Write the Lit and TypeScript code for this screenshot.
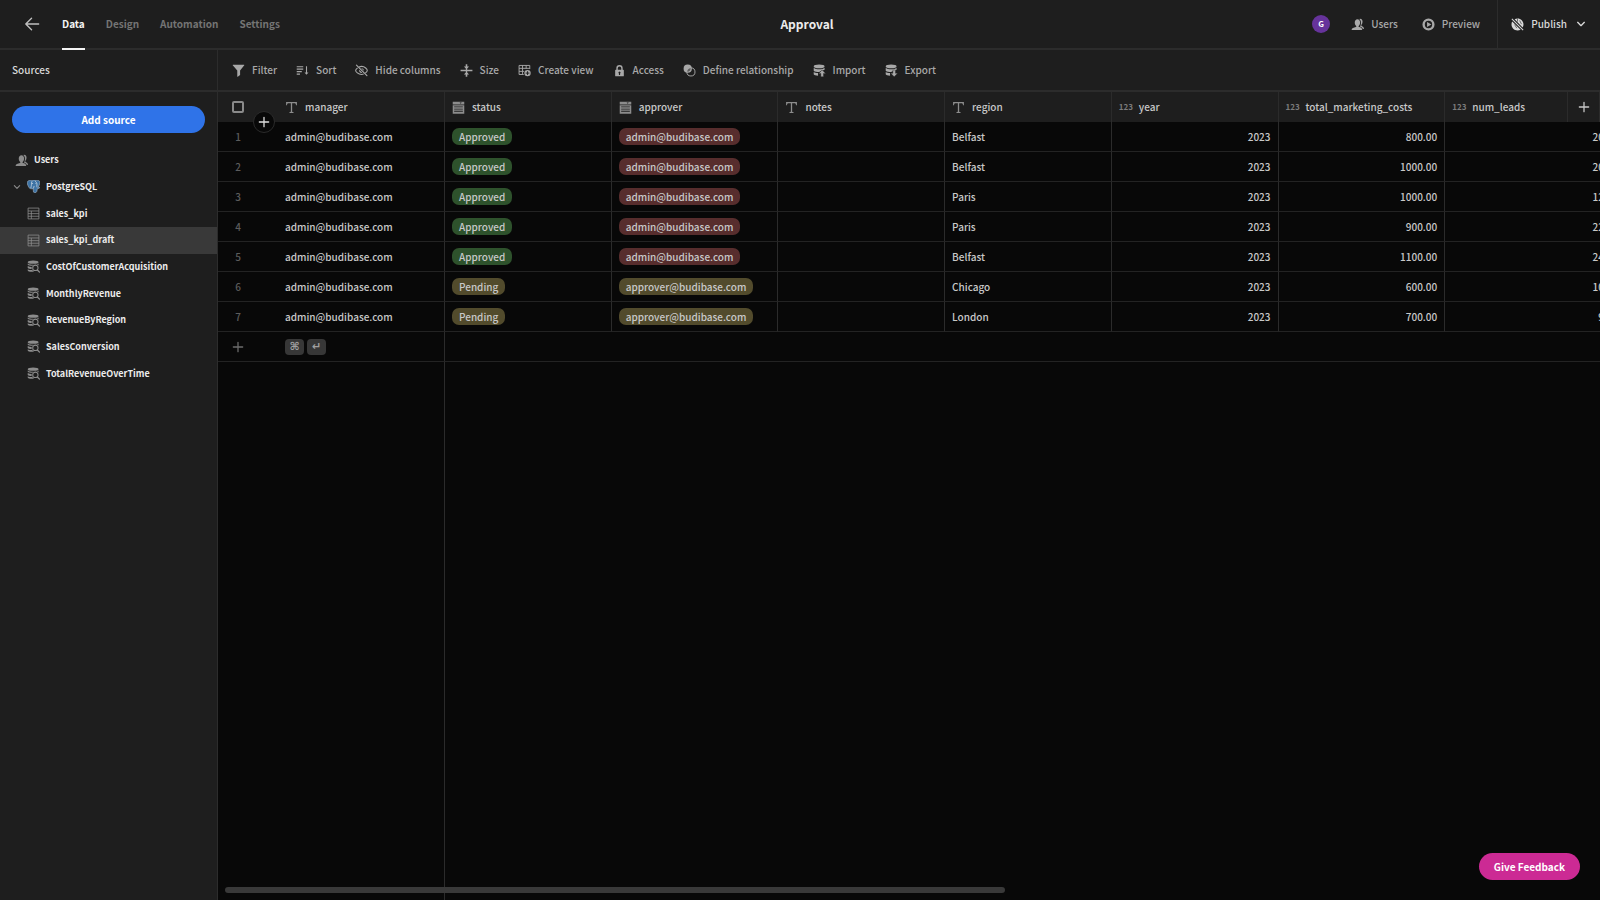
import { LitElement, html, css, svg, nothing } from "lit";
import { customElement, property, state } from "lit/decorators.js";
import { classMap } from "lit/directives/class-map.js";

const ICONS: Record<string, unknown> = {
  back: svg`<path d="M16.500 9H2M8.500 2.500 2 9l6.500 6.500" fill="none" stroke="currentColor" stroke-width="1.500" stroke-linecap="round" stroke-linejoin="round"/>`,
  users: svg`<path d="M11 12.6c-.6-.4-.7-1-.4-1.6 1.3-1.2 2-3 2-4.900 0-2.600-1.500-4.400-3.700-4.400S5.200 3.500 5.200 6.100c0 1.900.7 3.700 2 4.900.4.6.2 1.200-.4 1.600C3.800 13.300.8 14 .8 16.500h14.700c0-2.500-1.700-3.300-4.500-3.900z"/><path d="M12.500 1.200c2.200 0 3.500 1.500 3.500 4 0 1.800-.6 3.300-1.700 4.500-.3.6 0 1.100.5 1.400 1.700.6 3.100 1.500 3.100 4h-1.500c-.5-1.700-2-2.500-3.900-3.100.9-1.400 1.300-3.600 1.300-5.600 0-2.100-.9-3.800-2.300-4.900z"/>`,
  play: svg`<path fill-rule="evenodd" d="M9 .6a8.400 8.400 0 1 0 0 16.800A8.400 8.400 0 0 0 9 .6zm0 3.300a5.100 5.100 0 1 1 0 10.200A5.100 5.100 0 0 1 9 3.900z"/><path d="M7 5.400 13 9l-6 3.600z"/>`,
  publish: svg`<path d="M5 1.700C6.200 1 7.600.7 9 .7c4.600 0 8.300 3.700 8.300 8.300 0 1.600-.4 3-1.200 4.200zM1.700 5 13.300 16.200C12 17 10.600 17.300 9 17.300 4.400 17.300.7 13.600.7 9c0-1.500.3-2.800 1-4z"/><path d="M1.200 1.200 16.800 16.800" stroke="currentColor" stroke-width="1.400"/><path d="M9 1v4M5 9l3 5M12 3.500l2.500 5" stroke="#1e1e1e" stroke-width=".8"/>`,
  chevron: svg`<path d="M3 6 9 12 15 6" fill="none" stroke="currentColor" stroke-width="2.400" stroke-linecap="round" stroke-linejoin="round"/>`,
  filter: svg`<path d="M1.400 1h15.200c.5 0 .7.500.4.900L11.200 9v6.200l-3.200 2.500c-.3.200-.7 0-.7-.4V9L1 1.900C.700 1.500 1 1 1.400 1z"/>`,
  sort: svg`<path d="M1 3h9v1.600H1zM1 6.400h9V8H1zM1 9.800h7v1.600H1zM1 13.200h4.500v1.600H1zM13.800 3h1.500v8.800h2L14.500 15l-2.700-3.200h2z"/>`,
  hide: svg`<path d="M2 1.500 16.500 16" stroke="currentColor" stroke-width="1.600" stroke-linecap="round"/><path d="M5.500 4.200C7 3.500 8 3.300 9.200 3.300c4.500 0 7.800 4 7.800 5.600 0 .9-1 2.400-2.800 3.700M3.600 5.400C1.800 6.700.9 8.100.9 8.900c0 1.500 3.500 5.600 8.200 5.600 1 0 2-.2 2.900-.5" fill="none" stroke="currentColor" stroke-width="1.500"/><path d="M8.500 5.800a3.300 3.300 0 0 1 3.700 3.700zM5.800 8a3.300 3.300 0 0 0 4.300 4.100z"/>`,
  size: svg`<path d="M.8 8.100h16.400V10H.8zM8.100 3h1.800v12H8.100z"/><path d="M9 7.400 5.400 3.600h2.500V.2h2.200v3.400h2.500zM9 10.600l3.600 3.800h-2.500v3.400H7.900v-3.400H5.400z"/>`,
  view: svg`<path d="M1.500 2h14.800v5M1.500 2v12.500H8M1.500 6h14.800M1.500 10.200h7M6.300 2v12.500M11.300 2v4.500" fill="none" stroke="currentColor" stroke-width="1.300"/><circle cx="13.200" cy="12.600" r="4.400"/><path d="M13.200 10v5.200M10.600 12.600h5.200" stroke="#1e1e1e" stroke-width="1.300"/>`,
  lock: svg`<path fill-rule="evenodd" d="M14.200 8h-.8V5.800a4.400 4.400 0 0 0-8.800 0V8h-.8c-.5 0-.8.300-.8.800v7.400c0 .5.300.8.800.8h10.400c.5 0 .8-.3.800-.8V8.800c0-.5-.3-.8-.8-.8zM6.600 5.800a2.400 2.400 0 0 1 4.800 0V8H6.600zm3.200 7.400v2H8.200v-2a1.400 1.400 0 1 1 1.600 0z"/>`,
  relation: svg`<circle cx="6.500" cy="6.500" r="5.700"/><circle cx="11" cy="11" r="5.600" fill="none" stroke="currentColor" stroke-width="1.300"/><path d="M5.800 10.600a5.300 5.300 0 0 1 5-4.800 5.300 5.300 0 0 1-5 4.800z" fill="#1e1e1e" opacity=".55"/>`,
  importdb: svg`<ellipse cx="8.500" cy="3.300" rx="7.500" ry="2.500"/><path d="M1 5.200c1.600 1.600 4.500 2 7.500 2s5.900-.4 7.500-2v2.600c-1 .6-2 .8-3 .9L8.500 11C5.500 11 2.400 10.600 1 9.200zM1 11c1.300 1.200 3.600 1.500 6 1.500v3.800C4 16.200 1 15.500 1 14.300z"/><path d="m12.700 8.200 4.800 4.800h-3v4.500h-3.600V13h-3z" stroke="#1e1e1e" stroke-width=".5"/>`,
  exportdb: svg`<ellipse cx="8.500" cy="3.300" rx="7.500" ry="2.500"/><path d="M1 5.200c1.600 1.600 4.500 2 7.500 2s5.900-.4 7.500-2v2.600c-1 .6-2 .8-3 .9L8.500 11C5.500 11 2.400 10.600 1 9.200zM1 11c1.300 1.200 3.600 1.500 6 1.500v3.800C4 16.200 1 15.500 1 14.300z"/><path d="m12.700 17.600 4.800-4.800h-3V8.300h-3.600v4.500h-3z" stroke="#1e1e1e" stroke-width=".5"/>`,
  text: svg`<path d="M1.500 1.500h15v4.300h-1.300c-.1-1.800-.6-2.700-2.300-2.700H9.900v11.200c0 .9.500 1.200 2 1.200v1.200H6.100v-1.200c1.500 0 2-.3 2-1.200V3.100h-3c-1.700 0-2.200.9-2.300 2.700H1.500z"/>`,
  options: svg`<path fill-rule="evenodd" d="M1 1h16v4H1zm9.500 1.200L12 3.900l1.500-1.700z"/><path fill-rule="evenodd" d="M1 6h16v11.500H1zm2 1.600v1.200h12V7.600zm0 3v1.200h12v-1.200zm0 3v1.200h12v-1.200z"/>`,
  plus: svg`<path d="M9 2v14M2 9h14" stroke="currentColor" stroke-width="1.900" stroke-linecap="round"/>`,
  table: svg`<path d="M1.500 1.500h15v15h-15zM1.500 5.500h15M1.500 9.200h15M1.500 12.800h15M6 5.500v11" fill="none" stroke="currentColor" stroke-width="1.100"/>`,
  query: svg`<ellipse cx="8.500" cy="3" rx="7.500" ry="2.300"/><path d="M1 4.800c2 1.400 4.800 1.800 7.500 1.800S14 6.200 16 4.800v2.700a5.500 5.500 0 0 0-8.500.6C4.500 8 2 7.500 1 6.500zM1 8.300c1.500.8 3.500 1.200 5.600 1.300-.3 1-.3 2 0 2.900-2.400 0-4.500-.4-5.600-1.300zM1 12.800c1.500.8 4 1.200 6.300 1.200.6 1 1.500 1.700 2.600 2.100C5.500 16.800 1 16 1 14.500z"/><circle cx="11.600" cy="11" r="3.700" fill="none" stroke="currentColor" stroke-width="1.400"/><path d="m14.300 13.800 3 3" stroke="currentColor" stroke-width="1.900" stroke-linecap="round"/>`,
  postgres: svg`<path d="M2.600.8C4.500-.2 6.200.3 7.400.6c1.200-.6 2.800-.6 4.100-.1 2.500-.7 4.800-.2 6 1.200.9 1.600-.4 5.900-2 8.400 1.100.2 1.900-.1 2.300.2-.3 1.200-2.100 1.900-3.700 1.800-.1 2.200-.2 4.100-1.600 5.200-1.200.8-2.900.6-3.500-.6-.5-1.400-.2-3.200-.4-4.900-1.100.7-2.600.6-3.400.1-.7.500-1.400 0-2-1C1.700 9.200.4 5.700.4 3.800.4 2.500 1.400 1.300 2.600.8z" fill="#3d73a5" stroke="#aebccb" stroke-width=".8"/><path d="M7.200 1.600C5.900 3 6.300 5.200 6.100 7.400c.1 1.400-.8 2.200-.8 3.800M11.200 1.400c1.900 1.400 2.800 3.200 2.600 5.400-.2 1.300-.4 2.200.2 3.500M8.900 11.600c-.1-1.600 1.100-1.900 1-3.400M6.900 4.900h1.500M11.700 4.700h1.200" fill="none" stroke="#d4dee8" stroke-width="1"/>`,
};

@customElement("ui-icon")
class UiIcon extends LitElement {
  @property() name = "";
  static styles = css`
    :host { display: inline-flex; flex: none; width: 13px; height: 13px; }
    svg { width: 100%; height: 100%; fill: currentColor; display: block; }
  `;
  render() {
    return html`<svg viewBox="0 0 18 18" aria-hidden="true">${ICONS[this.name] ?? nothing}</svg>`;
  }
}

interface Row {
  status: "Approved" | "Pending";
  approver: string;
  region: string;
  costs: string;
  leads: number;
}

const ADMIN = "admin@budibase.com";
const APPROVER = "approver@budibase.com";

@customElement("app-root")
class AppRoot extends LitElement {
  @state() private selected = "sales_kpi_draft";

  private tabs = ["Data", "Design", "Automation", "Settings"];

  private sources = [
    { name: "Users", icon: "users", level: 0 },
    { name: "PostgreSQL", icon: "postgres", level: 1 },
    { name: "sales_kpi", icon: "table", level: 2 },
    { name: "sales_kpi_draft", icon: "table", level: 2 },
    { name: "CostOfCustomerAcquisition", icon: "query", level: 2 },
    { name: "MonthlyRevenue", icon: "query", level: 2 },
    { name: "RevenueByRegion", icon: "query", level: 2 },
    { name: "SalesConversion", icon: "query", level: 2 },
    { name: "TotalRevenueOverTime", icon: "query", level: 2 },
  ];

  private tools = [
    ["filter", "Filter"],
    ["sort", "Sort"],
    ["hide", "Hide columns"],
    ["size", "Size"],
    ["view", "Create view"],
    ["lock", "Access"],
    ["relation", "Define relationship"],
    ["importdb", "Import"],
    ["exportdb", "Export"],
  ];

  private columns = [
    ["options", "status"],
    ["options", "approver"],
    ["text", "notes"],
    ["text", "region"],
    ["number", "year"],
    ["number", "total_marketing_costs"],
    ["number", "num_leads"],
  ];

  private rows: Row[] = [
    { status: "Approved", approver: ADMIN, region: "Belfast", costs: "800.00", leads: 20 },
    { status: "Approved", approver: ADMIN, region: "Belfast", costs: "1000.00", leads: 20 },
    { status: "Approved", approver: ADMIN, region: "Paris", costs: "1000.00", leads: 12 },
    { status: "Approved", approver: ADMIN, region: "Paris", costs: "900.00", leads: 22 },
    { status: "Approved", approver: ADMIN, region: "Belfast", costs: "1100.00", leads: 24 },
    { status: "Pending", approver: APPROVER, region: "Chicago", costs: "600.00", leads: 10 },
    { status: "Pending", approver: APPROVER, region: "London", costs: "700.00", leads: 9 },
  ];

  static styles = css`
    :host {
      display: flex;
      flex-direction: column;
      height: 100vh;
      overflow: hidden;
      background: #080808;
      color: #c8c8c8;
      font: 500 10px/16px "Noto Sans CJK SC", "Noto Sans", sans-serif;
    }
    * { box-sizing: border-box; }
    button { font: inherit; color: inherit; background: none; border: 0; padding: 0; margin: 0; cursor: pointer; }
    a { color: inherit; text-decoration: none; }

    .top {
      display: grid;
      grid-template-columns: 1fr auto 1fr;
      height: 50px;
      flex: none;
      background: #1e1e1e;
      border-bottom: 2px solid #2c2c2c;
    }
    .top-left { display: flex; align-items: stretch; padding-left: 24px; }
    .back { display: flex; align-items: center; color: #c0c0c0; margin-right: 22px; }
    .back ui-icon { width: 16px; height: 16px; }
    .tabs { display: flex; gap: 21px; margin-bottom: -2px; }
    .tab { display: flex; align-items: center; font-weight: 700; color: #747474; border-bottom: 2px solid transparent; }
    .tab.on { color: #f4f4f4; border-color: #f4f4f4; }
    .title { margin: 0; align-self: center; padding-left: 14px; font-size: 12px; line-height: 20px; font-weight: 700; color: #ececec; }
    .top-right { display: flex; align-items: stretch; justify-content: flex-end; }
    .avatar {
      align-self: center;
      width: 18px;
      height: 18px;
      border-radius: 50%;
      background: #66339b;
      color: #fff;
      font-size: 8px;
      line-height: 18px;
      font-weight: 700;
      text-align: center;
      margin-right: 21px;
    }
    .action { display: flex; align-items: center; gap: 7px; color: #a8a8a8; margin-right: 24px; }
    .action:nth-of-type(2) { margin-right: 17px; }
    .publish {
      display: flex;
      align-items: center;
      gap: 7px;
      padding: 0 14px 0 13px;
      border-left: 1px solid #2c2c2c;
      color: #d8d8d8;
    }
    .caret { width: 10px; height: 10px; margin-left: 2px; }

    .body { flex: 1; min-height: 0; display: flex; }
    .side { width: 218px; flex: none; background: #1e1e1e; border-right: 1px solid #2c2c2c; }
    .side-head {
      margin: 0;
      height: 42px;
      display: flex;
      align-items: center;
      padding: 0 12px;
      border-bottom: 2px solid #2c2c2c;
      font-size: 10px;
      font-weight: 500;
      color: #d8d8d8;
    }
    .add-source {
      display: block;
      width: calc(100% - 24px);
      height: 27px;
      margin: 14px 12px;
      border-radius: 14px;
      background: #2f73e8;
      color: #fff;
      font-weight: 700;
    }
    .tree { display: grid; grid-auto-rows: 1fr; height: 240px; margin: 0; padding: 0; list-style: none; }
    .node {
      display: flex;
      align-items: center;
      gap: 6px;
      width: 100%;
      height: 100%;
      padding-left: 15px;
      font-size: 9px;
      font-weight: 700;
      color: #ececec;
    }
    .node .glyph { color: #8c8c8c; }
    .node.sub { padding-left: 27px; }
    .node.root { padding-left: 13px; }
    .node.on { background: #393939; }
    .node .twist { width: 8px; height: 8px; color: #8c8c8c; }

    .main { flex: 1; min-width: 0; display: flex; flex-direction: column; position: relative; }
    .tools {
      display: flex;
      align-items: center;
      gap: 19px;
      height: 42px;
      flex: none;
      padding: 0 14px;
      background: #1e1e1e;
      border-bottom: 2px solid #2c2c2c;
    }
    .tool { display: flex; align-items: center; gap: 7px; color: #a8a8a8; white-space: nowrap; }

    .grid { flex: 1; min-height: 0; display: flex; flex-direction: column; overflow: hidden; position: relative; }
    table { border-collapse: separate; border-spacing: 0; table-layout: fixed; width: 1394px; flex: none; }
    .c-index { width: 60px; }
    .c-main { width: 167px; }
    th, td { height: 30px; padding: 0 7px; border-right: 1px solid #2b2b2b; text-align: left; font-weight: 500; white-space: nowrap; overflow: hidden; }
    th { background: #1e1e1e; }
    td { border-bottom: 1px solid #232323; background: #080808; line-height: 16px; }
    .th { display: flex; align-items: center; gap: 7px; line-height: 16px; }
    .th ui-icon { color: #8c8c8c; }
    .digits { width: 13px; flex: none; font-size: 8px; line-height: 12px; font-weight: 700; color: #7c7c7c; }
    .index { border-right: 0; padding: 0; color: #5c5c5c; }
    .index-in { display: flex; justify-content: center; width: 40px; }
    .num { text-align: right; }
    .tick { appearance: none; display: block; width: 12px; height: 12px; margin: 0; border: 2px solid #8a8a8a; border-radius: 2px; }
    .pill { display: block; width: fit-content; height: 17px; line-height: 17px; padding: 0 7px; border-radius: 7px; }
    .green { background: #2e522c; }
    .red { background: #572d2d; }
    .olive { background: #524b2c; }
    .add-row { display: inline-flex; color: #6c6c6c; }
    .add-row ui-icon, .add-col ui-icon { width: 12px; height: 12px; }
    .keys { display: flex; gap: 3px; }
    kbd {
      height: 16px;
      min-width: 19px;
      padding: 0 4px;
      border-radius: 4px;
      background: #373737;
      color: #a0a0a0;
      font: 700 11px/16px "DejaVu Sans", sans-serif;
      text-align: center;
    }
    .rest { flex: 1; width: 227px; border-right: 1px solid #2b2b2b; }
    .add-col {
      position: absolute;
      top: 0;
      right: 0;
      width: 33px;
      height: 30px;
      display: flex;
      align-items: center;
      justify-content: center;
      background: #1e1e1e;
      border-left: 1px solid #2b2b2b;
      border-right: 1px solid #2b2b2b;
      color: #c8c8c8;
    }
    .insert {
      position: absolute;
      top: 19px;
      left: 35px;
      width: 22px;
      height: 22px;
      display: flex;
      align-items: center;
      justify-content: center;
      border: 1px solid #2b2b2b;
      border-radius: 50%;
      background: #080808;
      color: #e0e0e0;
    }
    .insert ui-icon { width: 12px; height: 12px; }
    .scroll { position: absolute; left: 7px; right: 7px; bottom: 7px; height: 6px; }
    .thumb { width: 57%; height: 6px; border-radius: 3px; background: #393939; }
    .feedback {
      position: absolute;
      right: 20px;
      bottom: 20px;
      height: 27px;
      padding: 0 15px;
      border-radius: 14px;
      background: #cc2a94;
      color: #fff;
      font-weight: 700;
    }
  `;

  private renderNode(s: { name: string; icon: string; level: number }) {
    return html`<li>
      <button
        class=${classMap({ node: true, root: s.level === 1, sub: s.level === 2, on: s.name === this.selected })}
        @click=${() => (this.selected = s.name)}
      >
        ${s.level === 1 ? html`<ui-icon class="twist" name="chevron"></ui-icon>` : nothing}
        <ui-icon class="glyph" name=${s.icon}></ui-icon>${s.name}
      </button>
    </li>`;
  }

  private renderRow(r: Row, i: number) {
    const approved = r.status === "Approved";
    return html`<tr>
      <td class="index"><span class="index-in">${i + 1}</span></td>
      <td>${ADMIN}</td>
      <td><span class="pill ${approved ? "green" : "olive"}">${r.status}</span></td>
      <td><span class="pill ${approved ? "red" : "olive"}">${r.approver}</span></td>
      <td></td>
      <td>${r.region}</td>
      <td class="num">2023</td>
      <td class="num">${r.costs}</td>
      <td class="num">${r.leads}</td>
    </tr>`;
  }

  render() {
    return html`
      <header class="top">
        <div class="top-left">
          <button class="back" aria-label="Back"><ui-icon name="back"></ui-icon></button>
          <nav class="tabs">
            ${this.tabs.map((t, i) => html`<a href="#" class=${classMap({ tab: true, on: i === 0 })}>${t}</a>`)}
          </nav>
        </div>
        <h1 class="title">Approval</h1>
        <div class="top-right">
          <span class="avatar">G</span>
          <button class="action"><ui-icon name="users"></ui-icon>Users</button>
          <button class="action"><ui-icon name="play"></ui-icon>Preview</button>
          <button class="publish">
            <ui-icon name="publish"></ui-icon>Publish<ui-icon class="caret" name="chevron"></ui-icon>
          </button>
        </div>
      </header>
      <div class="body">
        <aside class="side">
          <h2 class="side-head">Sources</h2>
          <button class="add-source">Add source</button>
          <ul class="tree">${this.sources.map((s) => this.renderNode(s))}</ul>
        </aside>
        <main class="main">
          <div class="tools">
            ${this.tools.map(([icon, label]) => html`<button class="tool"><ui-icon name=${icon}></ui-icon>${label}</button>`)}
          </div>
          <div class="grid">
            <table>
              <colgroup><col class="c-index" /><col class="c-main" /></colgroup>
              <thead>
                <tr>
                  <th class="index">
                    <span class="index-in"><input class="tick" type="checkbox" aria-label="Select all rows" /></span>
                  </th>
                  <th><span class="th"><ui-icon name="text"></ui-icon>manager</span></th>
                  ${this.columns.map(
                    ([icon, label]) => html`<th>
                      <span class="th">
                        ${icon === "number"
                          ? html`<span class="digits">123</span>`
                          : html`<ui-icon name=${icon}></ui-icon>`}
                        ${label}
                      </span>
                    </th>`
                  )}
                </tr>
              </thead>
              <tbody>
                ${this.rows.map((r, i) => this.renderRow(r, i))}
                <tr>
                  <td class="index">
                    <span class="index-in"><button class="add-row" aria-label="Add row"><ui-icon name="plus"></ui-icon></button></span>
                  </td>
                  <td><span class="keys"><kbd>⌘</kbd><kbd>↵</kbd></span></td>
                  <td colspan="7"></td>
                </tr>
              </tbody>
            </table>
            <div class="rest"></div>
            <button class="add-col" aria-label="Add column"><ui-icon name="plus"></ui-icon></button>
            <button class="insert" aria-label="Insert row"><ui-icon name="plus"></ui-icon></button>
            <div class="scroll"><div class="thumb"></div></div>
          </div>
          <button class="feedback">Give Feedback</button>
        </main>
      </div>
    `;
  }
}
